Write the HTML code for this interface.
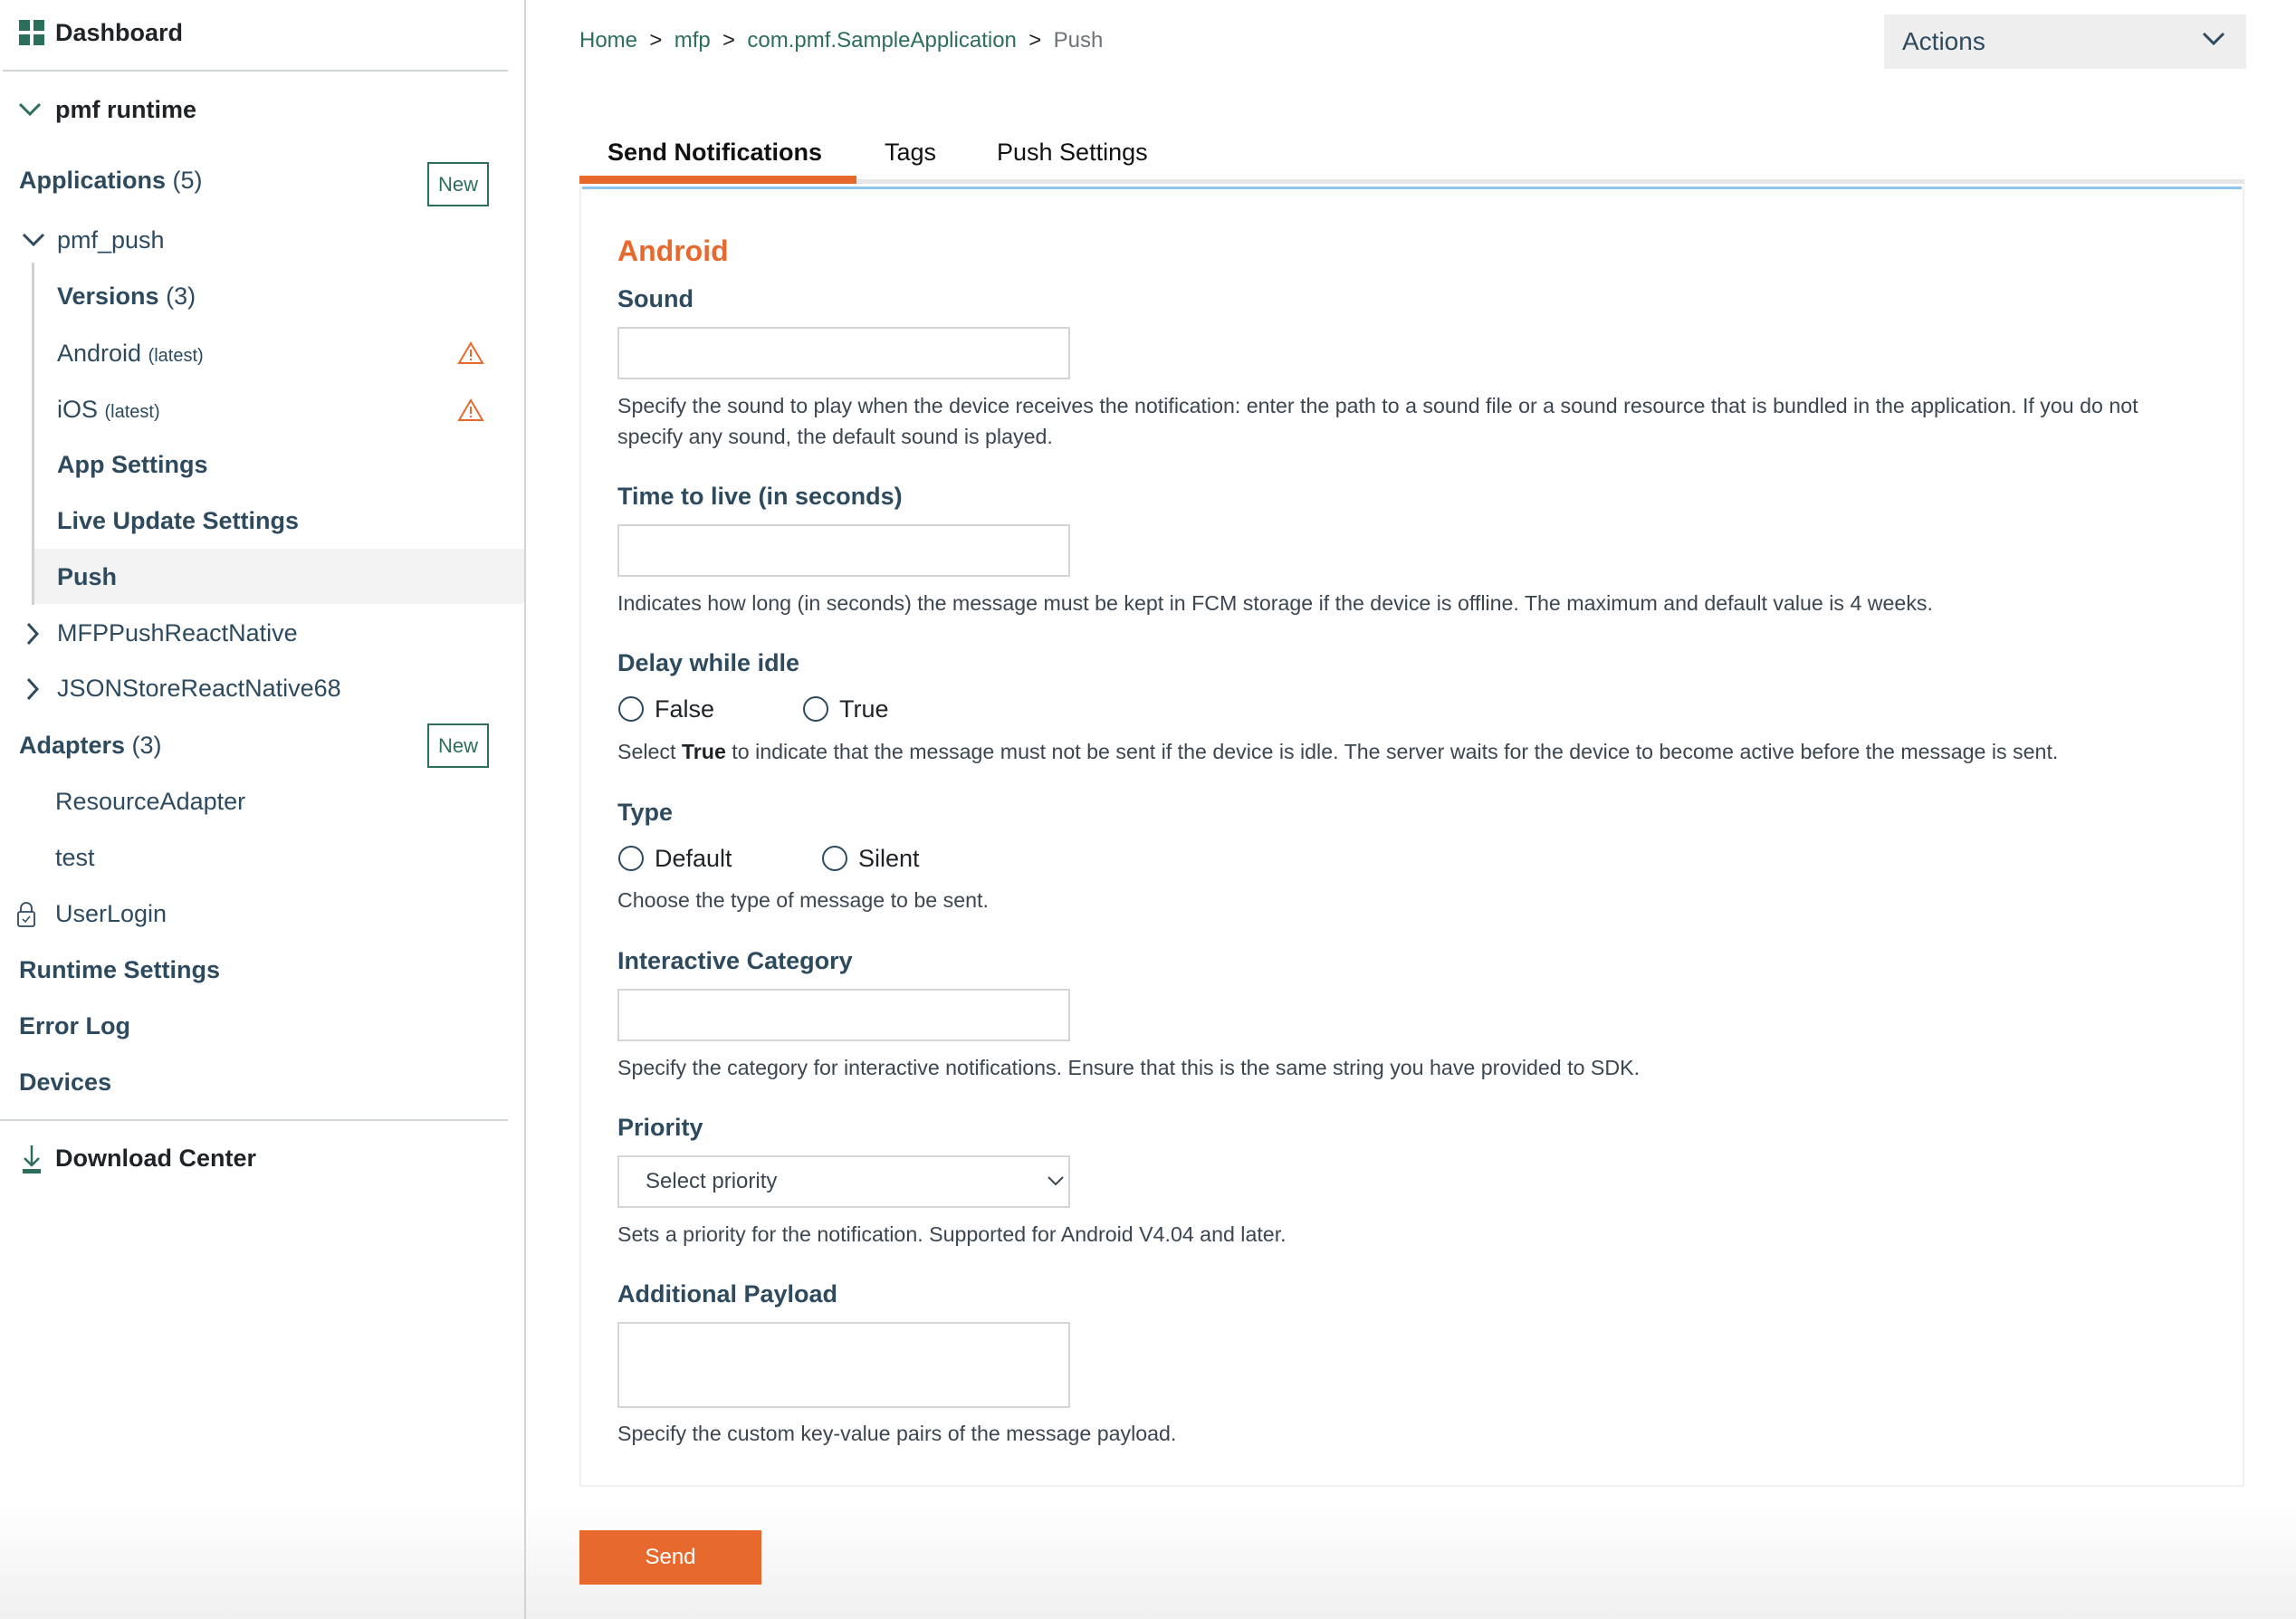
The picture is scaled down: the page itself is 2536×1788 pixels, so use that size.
<!DOCTYPE html>
<html><head><meta charset="utf-8"><style>
*{margin:0;padding:0;box-sizing:border-box}
body{width:2536px;height:1788px;position:relative;overflow:hidden;background:#fff;font-family:"Liberation Sans",Arial,sans-serif;color:#2d4a5e}
.a{position:absolute;white-space:nowrap;line-height:40px}
.b{font-weight:bold}
.sb{font-size:27px}
.n{font-size:27px}
.sm{font-size:20px}
.lbl{font-size:27px;font-weight:bold;color:#2d4a5e}
.help{font-size:23.2px;color:#3b4650;line-height:34px}
.inp{position:absolute;left:682px;width:500px;border:2px solid #d3d6d8;background:#fff}
.newb{position:absolute;left:472px;width:68px;height:49px;border:2px solid #2c6e5b;color:#2c6e5b;font-size:22px;text-align:center;line-height:45px}
.radio{position:absolute;width:28px;height:28px;border:2.5px solid #2d4a5e;border-radius:50%}
.rt{font-size:27px;color:#1e2328}
</style></head><body>
<div style="position:absolute;left:0;top:1660px;width:2536px;height:128px;background:linear-gradient(rgba(240,240,240,0),rgba(238,238,238,0.9))"></div>
<!-- sidebar -->
<div style="position:absolute;left:579px;top:0;width:2px;height:1788px;background:#d0d4d6"></div>
<svg style="position:absolute;left:21px;top:22px" width="29" height="29"><rect x="0" y="0" width="12" height="12" fill="#2c6e5b"/><rect x="16" y="0" width="12" height="12" fill="#2c6e5b"/><rect x="0" y="16" width="12" height="12" fill="#2c6e5b"/><rect x="16" y="16" width="12" height="12" fill="#2c6e5b"/></svg>
<div class="a b sb" style="left:61px;top:16px;color:#1e2328">Dashboard</div>
<div style="position:absolute;left:3px;top:77px;width:558px;height:2px;background:#d0d6d6"></div>
<svg style="position:absolute;left:20px;top:113px" width="26" height="16"><path d="M2 2 L13 13 L24 2" fill="none" stroke="#2c6e5b" stroke-width="3"/></svg>
<div class="a b sb" style="left:61px;top:101px;color:#1e2328">pmf runtime</div>
<div class="a b sb" style="left:21px;top:179px">Applications <span style="font-weight:normal">(5)</span></div>
<div class="newb" style="top:179px">New</div>
<svg style="position:absolute;left:24px;top:257px" width="26" height="16"><path d="M2 2 L13 13 L24 2" fill="none" stroke="#2d4a5e" stroke-width="3"/></svg>
<div class="a n" style="left:63px;top:245px">pmf_push</div>
<div style="position:absolute;left:35px;top:290px;width:3px;height:378px;background:#ccd2d4"></div>
<div class="a b sb" style="left:63px;top:307px">Versions <span style="font-weight:normal">(3)</span></div>
<div class="a n" style="left:63px;top:370px">Android <span class="sm">(latest)</span></div>
<svg style="position:absolute;left:505px;top:377px" width="30" height="26"><path d="M15 2 L28 24 L2 24 Z" fill="none" stroke="#e8692e" stroke-width="2"/><path d="M15 9 V17 M15 19 V21" stroke="#e8692e" stroke-width="2"/></svg>
<div class="a n" style="left:63px;top:432px">iOS <span class="sm">(latest)</span></div>
<svg style="position:absolute;left:505px;top:440px" width="30" height="26"><path d="M15 2 L28 24 L2 24 Z" fill="none" stroke="#e8692e" stroke-width="2"/><path d="M15 9 V17 M15 19 V21" stroke="#e8692e" stroke-width="2"/></svg>
<div class="a b sb" style="left:63px;top:493px">App Settings</div>
<div class="a b sb" style="left:63px;top:555px">Live Update Settings</div>
<div style="position:absolute;left:38px;top:606px;width:541px;height:61px;background:#f3f3f3"></div>
<div class="a b sb" style="left:63px;top:617px">Push</div>
<svg style="position:absolute;left:28px;top:687px" width="16" height="26"><path d="M3 2 L13 13 L3 24" fill="none" stroke="#2d4a5e" stroke-width="3"/></svg>
<div class="a n" style="left:63px;top:679px">MFPPushReactNative</div>
<svg style="position:absolute;left:28px;top:748px" width="16" height="26"><path d="M3 2 L13 13 L3 24" fill="none" stroke="#2d4a5e" stroke-width="3"/></svg>
<div class="a n" style="left:63px;top:740px">JSONStoreReactNative68</div>
<div class="a b sb" style="left:21px;top:803px">Adapters <span style="font-weight:normal">(3)</span></div>
<div class="newb" style="top:799px">New</div>
<div class="a n" style="left:61px;top:865px">ResourceAdapter</div>
<div class="a n" style="left:61px;top:927px">test</div>
<svg style="position:absolute;left:18px;top:995px" width="22" height="30"><path d="M5 12 V8 A6 6 0 0 1 17 8 V12" fill="none" stroke="#2d4a5e" stroke-width="1.8"/><rect x="2" y="12" width="18" height="16" rx="2" fill="none" stroke="#2d4a5e" stroke-width="1.8"/><path d="M7 20 L10 23 L15 17" fill="none" stroke="#2d4a5e" stroke-width="1.5"/></svg>
<div class="a n" style="left:61px;top:989px">UserLogin</div>
<div class="a b sb" style="left:21px;top:1051px">Runtime Settings</div>
<div class="a b sb" style="left:21px;top:1113px">Error Log</div>
<div class="a b sb" style="left:21px;top:1175px">Devices</div>
<div style="position:absolute;left:0;top:1236px;width:561px;height:2px;background:#d0d6d6"></div>
<svg style="position:absolute;left:24px;top:1263px" width="22" height="34"><path d="M11 2 V24 M3 16 L11 24 L19 16" fill="none" stroke="#2c6e5b" stroke-width="2.5"/><rect x="1" y="28" width="20" height="5" fill="#2c6e5b"/></svg>
<div class="a b sb" style="left:61px;top:1259px;color:#1e2328">Download Center</div>

<!-- main -->
<div class="a" style="left:640px;top:25px;font-size:24px;color:#2c6e5b">Home <span style="color:#1e2328">&nbsp;&gt;&nbsp;</span> mfp <span style="color:#1e2328">&nbsp;&gt;&nbsp;</span> com.pmf.SampleApplication <span style="color:#1e2328">&nbsp;&gt;&nbsp;</span> <span style="color:#6b7378">Push</span></div>
<div style="position:absolute;left:2081px;top:16px;width:400px;height:60px;background:#eeeeee"></div>
<div class="a" style="left:2101px;top:26px;font-size:28px;color:#2d4a5e">Actions</div>
<svg style="position:absolute;left:2432px;top:35px" width="26" height="16"><path d="M2 2 L13 13 L24 2" fill="none" stroke="#2d4a5e" stroke-width="3"/></svg>

<div class="a b" style="left:671px;top:148px;font-size:27px;color:#111">Send Notifications</div>
<div class="a" style="left:977px;top:148px;font-size:27px;color:#111">Tags</div>
<div class="a" style="left:1101px;top:148px;font-size:27px;color:#111">Push Settings</div>
<div style="position:absolute;left:640px;top:198px;width:1839px;height:5px;background:#e6e6e6"></div>
<div style="position:absolute;left:640px;top:194px;width:306px;height:9px;background:#e8692e"></div>
<div style="position:absolute;left:640px;top:206px;width:1839px;height:1436px;border:2px solid #f0f0f0;border-top:none"></div>
<div style="position:absolute;left:643px;top:206px;width:1833px;height:3px;background:#8ec4f2"></div>

<div class="a b" style="left:682px;top:257px;font-size:32px;color:#e8692e">Android</div>
<div class="a lbl" style="left:682px;top:310px">Sound</div>
<div class="inp" style="top:361px;height:58px"></div>
<div class="a help" style="left:682px;top:431px">Specify the sound to play when the device receives the notification: enter the path to a sound file or a sound resource that is bundled in the application. If you do not</div>
<div class="a help" style="left:682px;top:465px">specify any sound, the default sound is played.</div>
<div class="a lbl" style="left:682px;top:528px">Time to live (in seconds)</div>
<div class="inp" style="top:579px;height:58px"></div>
<div class="a help" style="left:682px;top:649px">Indicates how long (in seconds) the message must be kept in FCM storage if the device is offline. The maximum and default value is 4 weeks.</div>
<div class="a lbl" style="left:682px;top:712px">Delay while idle</div>
<div class="radio" style="left:683px;top:769px"></div><div class="a rt" style="left:723px;top:763px">False</div>
<div class="radio" style="left:887px;top:769px"></div><div class="a rt" style="left:927px;top:763px">True</div>
<div class="a help" style="left:682px;top:813px">Select <b style="color:#1e2328">True</b> to indicate that the message must not be sent if the device is idle. The server waits for the device to become active before the message is sent.</div>
<div class="a lbl" style="left:682px;top:877px">Type</div>
<div class="radio" style="left:683px;top:934px"></div><div class="a rt" style="left:723px;top:928px">Default</div>
<div class="radio" style="left:908px;top:934px"></div><div class="a rt" style="left:948px;top:928px">Silent</div>
<div class="a help" style="left:682px;top:977px">Choose the type of message to be sent.</div>
<div class="a lbl" style="left:682px;top:1041px">Interactive Category</div>
<div class="inp" style="top:1092px;height:58px"></div>
<div class="a help" style="left:682px;top:1162px">Specify the category for interactive notifications. Ensure that this is the same string you have provided to SDK.</div>
<div class="a lbl" style="left:682px;top:1225px">Priority</div>
<div class="inp" style="top:1276px;height:58px"></div>
<div class="a" style="left:713px;top:1285px;font-size:24px;color:#3b4650">Select priority</div>
<svg style="position:absolute;left:1156px;top:1298px" width="20" height="13"><path d="M2 2 L10 10 L18 2" fill="none" stroke="#3b4650" stroke-width="2"/></svg>
<div class="a help" style="left:682px;top:1346px">Sets a priority for the notification. Supported for Android V4.04 and later.</div>
<div class="a lbl" style="left:682px;top:1409px">Additional Payload</div>
<div class="inp" style="top:1460px;height:95px"></div>
<div class="a help" style="left:682px;top:1566px">Specify the custom key-value pairs of the message payload.</div>

<div style="position:absolute;left:640px;top:1690px;width:201px;height:60px;background:#e8692e;color:#fff;font-size:24px;text-align:center;line-height:60px">Send</div>
</body></html>
